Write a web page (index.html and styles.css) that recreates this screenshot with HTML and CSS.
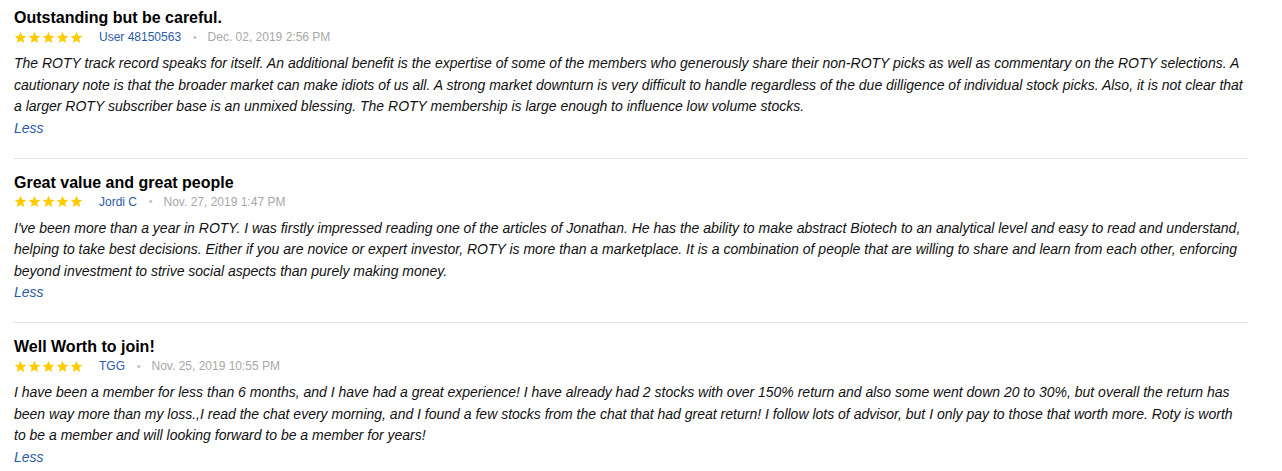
FILE: index.html
```html
<!DOCTYPE html>
<html>
<head>
<meta charset="utf-8">
<link rel="stylesheet" href="styles.css">
</head>
<body>
<div class="reviews">
  <div class="review">
    <div class="title">Outstanding but be careful.</div>
    <div class="meta">
      <span class="stars">
        <svg viewBox="0 0 24 24"><path d="M12 1.5l3.1 7.1 7.7.7-5.8 5.1 1.7 7.6L12 18l-6.7 4 1.7-7.6-5.8-5.1 7.7-.7z"/></svg>
        <svg viewBox="0 0 24 24"><path d="M12 1.5l3.1 7.1 7.7.7-5.8 5.1 1.7 7.6L12 18l-6.7 4 1.7-7.6-5.8-5.1 7.7-.7z"/></svg>
        <svg viewBox="0 0 24 24"><path d="M12 1.5l3.1 7.1 7.7.7-5.8 5.1 1.7 7.6L12 18l-6.7 4 1.7-7.6-5.8-5.1 7.7-.7z"/></svg>
        <svg viewBox="0 0 24 24"><path d="M12 1.5l3.1 7.1 7.7.7-5.8 5.1 1.7 7.6L12 18l-6.7 4 1.7-7.6-5.8-5.1 7.7-.7z"/></svg>
        <svg viewBox="0 0 24 24"><path d="M12 1.5l3.1 7.1 7.7.7-5.8 5.1 1.7 7.6L12 18l-6.7 4 1.7-7.6-5.8-5.1 7.7-.7z"/></svg>
      </span>
      <a class="user">User 48150563</a>
      <span class="dot">•</span>
      <span class="date">Dec. 02, 2019 2:56 PM</span>
    </div>
    <p class="body">The ROTY track record speaks for itself. An additional benefit is the expertise of some of the members who generously share their non-ROTY picks as well as commentary on the ROTY selections. A cautionary note is that the broader market can make idiots of us all. A strong market downturn is very difficult to handle regardless of the due dilligence of individual stock picks. Also, it is not clear that a larger ROTY subscriber base is an unmixed blessing. The ROTY membership is large enough to influence low volume stocks.</p>
    <a class="less">Less</a>
  </div>
  <div class="review">
    <div class="title">Great value and great people</div>
    <div class="meta">
      <span class="stars">
        <svg viewBox="0 0 24 24"><path d="M12 1.5l3.1 7.1 7.7.7-5.8 5.1 1.7 7.6L12 18l-6.7 4 1.7-7.6-5.8-5.1 7.7-.7z"/></svg>
        <svg viewBox="0 0 24 24"><path d="M12 1.5l3.1 7.1 7.7.7-5.8 5.1 1.7 7.6L12 18l-6.7 4 1.7-7.6-5.8-5.1 7.7-.7z"/></svg>
        <svg viewBox="0 0 24 24"><path d="M12 1.5l3.1 7.1 7.7.7-5.8 5.1 1.7 7.6L12 18l-6.7 4 1.7-7.6-5.8-5.1 7.7-.7z"/></svg>
        <svg viewBox="0 0 24 24"><path d="M12 1.5l3.1 7.1 7.7.7-5.8 5.1 1.7 7.6L12 18l-6.7 4 1.7-7.6-5.8-5.1 7.7-.7z"/></svg>
        <svg viewBox="0 0 24 24"><path d="M12 1.5l3.1 7.1 7.7.7-5.8 5.1 1.7 7.6L12 18l-6.7 4 1.7-7.6-5.8-5.1 7.7-.7z"/></svg>
      </span>
      <a class="user">Jordi C</a>
      <span class="dot">•</span>
      <span class="date">Nov. 27, 2019 1:47 PM</span>
    </div>
    <p class="body">I've been more than a year in ROTY. I was firstly impressed reading one of the articles of Jonathan. He has the ability to make abstract Biotech to an analytical level and easy to read and understand, helping to take best decisions. Either if you are novice or expert investor, ROTY is more than a marketplace. It is a combination of people that are willing to share and learn from each other, enforcing beyond investment to strive social aspects than purely making money.</p>
    <a class="less">Less</a>
  </div>
  <div class="review">
    <div class="title">Well Worth to join!</div>
    <div class="meta">
      <span class="stars">
        <svg viewBox="0 0 24 24"><path d="M12 1.5l3.1 7.1 7.7.7-5.8 5.1 1.7 7.6L12 18l-6.7 4 1.7-7.6-5.8-5.1 7.7-.7z"/></svg>
        <svg viewBox="0 0 24 24"><path d="M12 1.5l3.1 7.1 7.7.7-5.8 5.1 1.7 7.6L12 18l-6.7 4 1.7-7.6-5.8-5.1 7.7-.7z"/></svg>
        <svg viewBox="0 0 24 24"><path d="M12 1.5l3.1 7.1 7.7.7-5.8 5.1 1.7 7.6L12 18l-6.7 4 1.7-7.6-5.8-5.1 7.7-.7z"/></svg>
        <svg viewBox="0 0 24 24"><path d="M12 1.5l3.1 7.1 7.7.7-5.8 5.1 1.7 7.6L12 18l-6.7 4 1.7-7.6-5.8-5.1 7.7-.7z"/></svg>
        <svg viewBox="0 0 24 24"><path d="M12 1.5l3.1 7.1 7.7.7-5.8 5.1 1.7 7.6L12 18l-6.7 4 1.7-7.6-5.8-5.1 7.7-.7z"/></svg>
      </span>
      <a class="user">TGG</a>
      <span class="dot">•</span>
      <span class="date">Nov. 25, 2019 10:55 PM</span>
    </div>
    <p class="body">I have been a member for less than 6 months, and I have had a great experience! I have already had 2 stocks with over 150% return and also some went down 20 to 30%, but overall the return has been way more than my loss.,I read the chat every morning, and I found a few stocks from the chat that had great return! I follow lots of advisor, but I only pay to those that worth more. Roty is worth to be a member and will looking forward to be a member for years!</p>
    <a class="less">Less</a>
  </div>
</div>
</body>
</html>
```

FILE: styles.css
```css
* { box-sizing: border-box; }
body {
  margin: 0;
  background: #fff;
  font-family: Arial, "Liberation Sans", sans-serif;
  color: #222;
}
.reviews {
  padding: 0 34px 0 14px;
}
.review {
  padding: 14px 0 19px;
  border-bottom: 1px solid #e1e1e1;
}
.review:first-child {
  padding-top: 8px;
}
.title {
  font-size: 16px;
  font-weight: bold;
  line-height: 20px;
  color: #000;
}
.meta {
  display: flex;
  align-items: center;
  height: 18px;
  font-size: 12px;
}
.stars {
  display: flex;
  gap: 1px;
  margin-right: 16px;
}
.stars svg {
  width: 13px;
  height: 13px;
  fill: #ffcc00;
}
.user {
  color: #2a5ba6;
}
.dot {
  color: #bbb;
  margin: 0 11px 0 12px;
  font-size: 10px;
}
.date {
  color: #a8a8a8;
}
.body {
  margin: 7px 0 0;
  font-size: 14px;
  font-style: italic;
  line-height: 21.5px;
  color: #111;
}
.less {
  display: block;
  font-size: 14px;
  font-style: italic;
  line-height: 21px;
  color: #2a5ba6;
}
```
